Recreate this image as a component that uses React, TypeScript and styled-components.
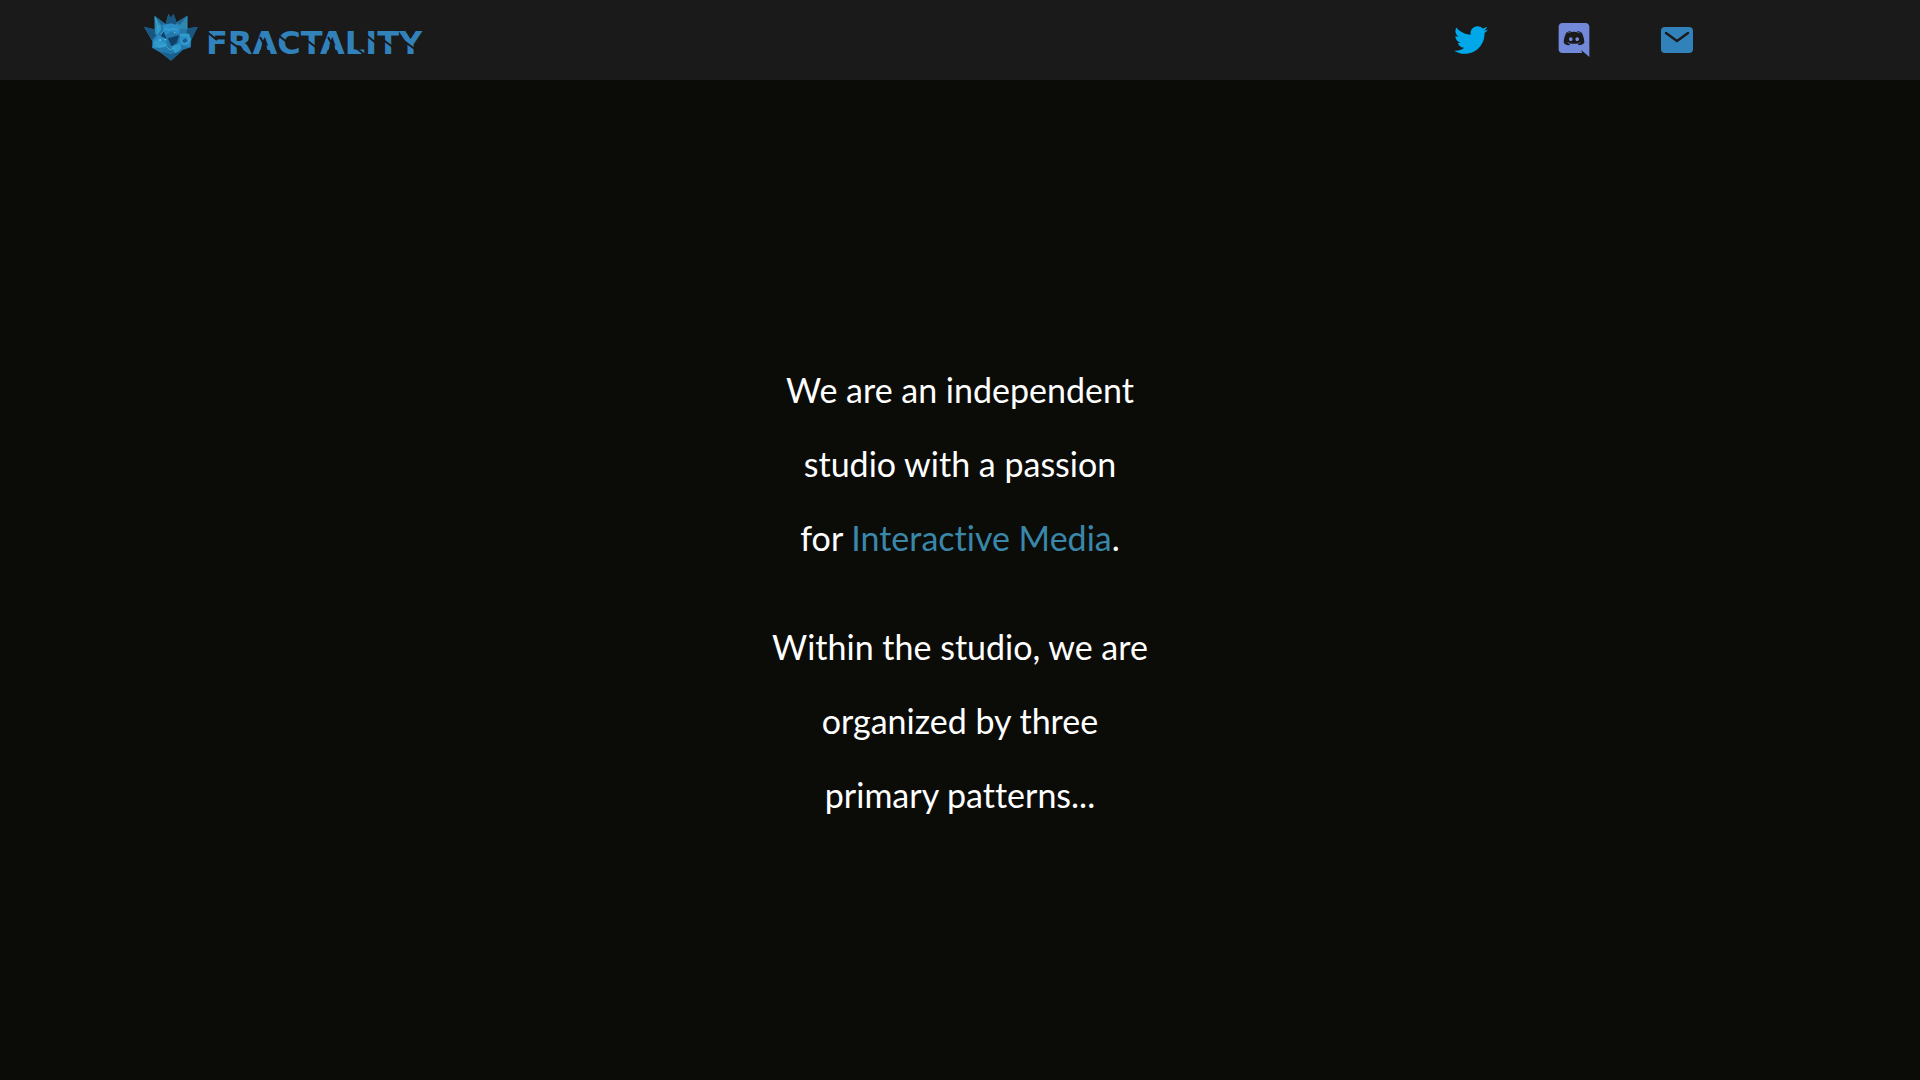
import React from "react";
import styled, { createGlobalStyle } from "styled-components";
import { FaTwitter } from "react-icons/fa";

const GlobalStyle = createGlobalStyle`
  *, *::before, *::after { box-sizing: border-box; }
  body {
    margin: 0;
    background: #0b0c08;
    color: #fff;
    font-family: Lato, "Open Sans", sans-serif;
  }
`;

const Page = styled.div`
  display: flex;
  flex-direction: column;
  min-height: 100vh;
`;

const Header = styled.header`
  display: flex;
  align-items: center;
  justify-content: space-between;
  height: 80px;
  padding: 0 10% 0 7.5%;
  background: #1a1a1a;
`;

const Brand = styled.a`
  display: flex;
  align-items: center;
  gap: 8px;
  text-decoration: none;

  svg { display: block; }
`;

const Crystal = styled.svg`
  width: 54px;
  height: 48px;
  margin-bottom: 6px;
`;

const Wordmark = styled.svg`
  width: 236px;
  height: 48px;
  margin-top: 8px;
  font-family: "DejaVu Sans", Verdana, sans-serif;
  font-size: 32px;
  font-weight: 700;
`;

const Social = styled.nav`
  display: flex;
`;

const SocialLink = styled.a<{ $color: string }>`
  display: flex;
  align-items: center;
  justify-content: center;
  width: 103px;
  height: 80px;
  color: ${({ $color }) => $color};
`;

const Main = styled.main`
  flex: 1;
  display: flex;
  flex-direction: column;
  align-items: center;
  justify-content: center;
  gap: 35px;
  padding: 24px 16px 0;
`;

const Statement = styled.p`
  margin: 0;
  font-size: 34px;
  line-height: 74px;
  text-align: center;
  font-variant-ligatures: none;
`;

const Accent = styled.span`
  color: #3a87aa;
`;

function CrystalLogo() {
  return (
    <Crystal viewBox="38 40 168 144" preserveAspectRatio="none" aria-hidden="true">
      <path fill="#2277ab" d="M38 82 71 89 71 48 105 73 114 42 122 54 130 42 139 68 173 48 173 86 205 82 185 121 184 143 158 151 122 183 91 160 64 145 65 126Z" />
      <path fill="#195680" d="m38 82 35 7 4 16-14 15ZM173 86l32-4-20 39-17-13ZM114 42l8 12 8-12 9 26 4 12-18-4-20-2Z" />
      <path fill="#3089ad" d="m71 48 20 25-4 18-15 14ZM173 48v41l-25-2-12-13Z" />
      <path fill="#1f6797" d="m71 48 34 25-14 2ZM139 68l34-20-24 29Z" />
      <path fill="#2b8dc5" d="m95 77 27-6 31 9-7 24-23-9-18 12ZM65 125l19-19 28 14-17 25-31 0ZM151 106l22-5 12 18-7 23-30-8Z" />
      <path fill="#2f9bcb" d="M75 84 88 74l4 14-14 22ZM67 127l16-5 29 12-10 9-28-1ZM123 141l27-10 4 15-18 18ZM158 101l21 2 5 16-7 11-5-17-19-3Z" />
      <path fill="#0f4067" d="m112 116 35-9-7 22-16 11ZM98 94l10 23-17-7Z" />
      <path fill="#185f8f" d="m91 156 31 8 35-11-35 30ZM167 115l7 9-11 7-7-8Z" />
      <path fill="none" stroke="#3ba9d4" strokeWidth="3" d="m91 104 13-17 15 4 8-4 14 4M84 142l19-5 15 13 16-5M152 119l7 13 13-1 7-9M73 54l10 30" />
      <path fill="#8be2ed" d="M86 119h4v4h-4ZM102 118h3v3h-3ZM132 98h3v3h-3ZM151 104h3v3h-3Z" />
    </Crystal>
  );
}

function BrandName() {
  return (
    <Wordmark viewBox="0 0 236 48">
      <text x="0" y="34" fill="#3182ba">FRACTALITY</text>
      <path fill="#1a1a1a" d="M58 18 63 35H53ZM126 18l5 17h-10Z" />
      <g stroke="#1a1a1a" strokeWidth="2" fill="none">
        <path d="M1 12l10 8M23 21l21 15M54 17l6 11M72 15l10 8M99 19l12 9M122 17l6 11M149 27l10 8M160 15l10 8M176 19l12 9M198 21l12 9" />
      </g>
    </Wordmark>
  );
}

function DiscordIcon() {
  return (
    <svg width="34" height="34" viewBox="0 0 24 24" fill="currentColor" aria-hidden="true">
      <path d="M20.222 0c1.406 0 2.54 1.137 2.607 2.475V24l-2.677-2.273-1.47-1.338-1.604-1.398.67 2.205H3.71c-1.402 0-2.54-1.065-2.54-2.476V2.48C1.17 1.142 2.31.003 3.715.003h16.5L20.222 0zm-6.118 5.683h-.03l-.202.2c2.073.6 3.076 1.537 3.076 1.537-1.336-.668-2.54-1.002-3.744-1.137-.87-.135-1.74-.064-2.475 0h-.2c-.47 0-1.47.2-2.81.735-.467.203-.735.336-.735.336s1.002-1.002 3.21-1.537l-.135-.135s-1.672-.064-3.477 1.27c0 0-1.805 3.144-1.805 7.02 0 0 1 1.74 3.743 1.806 0 0 .4-.533.805-1.002-1.54-.468-2.14-1.404-2.14-1.404s.134.066.335.2h.06c.03 0 .044.015.06.03v.006c.016.016.03.03.06.03.33.136.66.27.93.4.466.202 1.065.403 1.8.536.93.135 1.996.2 3.21 0 .6-.135 1.2-.267 1.8-.535.39-.2.87-.4 1.397-.737 0 0-.6.936-2.205 1.404.33.466.795 1 .795 1 2.744-.06 3.81-1.8 3.87-1.726 0-3.87-1.815-7.02-1.815-7.02-1.635-1.214-3.165-1.26-3.435-1.26l.056-.02zm.168 4.413c.703 0 1.27.6 1.27 1.335 0 .74-.57 1.34-1.27 1.34-.7 0-1.27-.6-1.27-1.334.002-.74.573-1.338 1.27-1.338zm-4.543 0c.7 0 1.266.6 1.266 1.335 0 .74-.57 1.34-1.27 1.34-.7 0-1.27-.6-1.27-1.334 0-.74.57-1.338 1.27-1.338z" />
    </svg>
  );
}

function MailIcon() {
  return (
    <svg width="32" height="26" viewBox="0 0 32 26" aria-hidden="true">
      <rect width="32" height="26" rx="4" fill="currentColor" />
      <path d="m5 6 11 8 11-8" fill="none" stroke="#1a1a1a" strokeWidth="2.4" strokeLinecap="round" />
    </svg>
  );
}

export default function App() {
  return (
    <>
      <GlobalStyle />
      <Page>
        <Header>
          <Brand href="#">
            <CrystalLogo />
            <BrandName />
          </Brand>
          <Social aria-label="Social links">
            <SocialLink href="#" aria-label="Twitter" $color="#00a8ea">
              <FaTwitter size={34} />
            </SocialLink>
            <SocialLink href="#" aria-label="Discord" $color="#7289da">
              <DiscordIcon />
            </SocialLink>
            <SocialLink href="#" aria-label="Email" $color="#3182ba">
              <MailIcon />
            </SocialLink>
          </Social>
        </Header>
        <Main>
          <Statement>
            We are an independent
            <br />
            studio with a passion
            <br />
            for <Accent>Interactive Media</Accent>.
          </Statement>
          <Statement>
            Within the studio, we are
            <br />
            organized by three
            <br />
            primary patterns...
          </Statement>
        </Main>
      </Page>
    </>
  );
}
